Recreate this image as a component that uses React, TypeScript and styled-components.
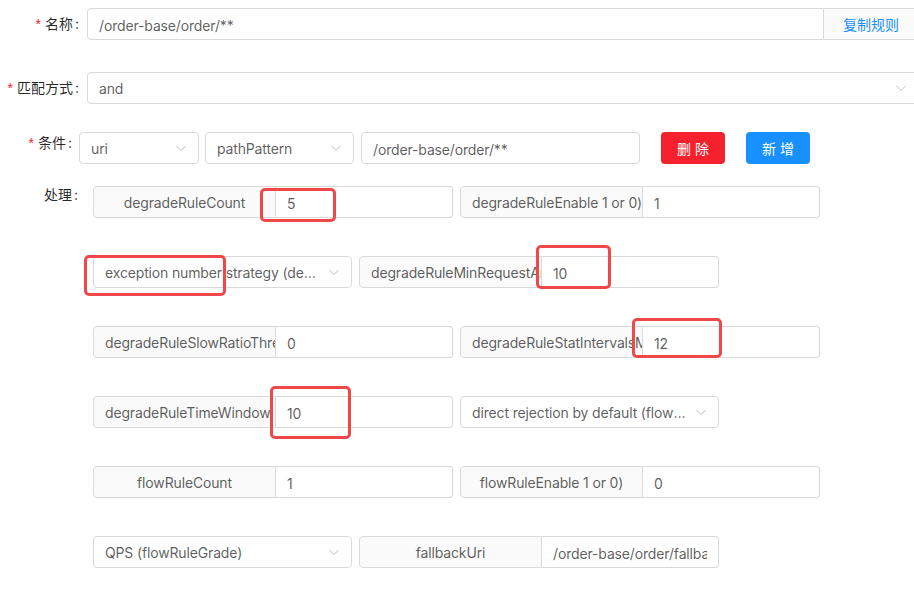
import React from 'react';
import styled, { createGlobalStyle } from 'styled-components';

const GlobalStyle = createGlobalStyle`
  html, body {
    margin: 0;
    padding: 0;
    background: #fff;
    overflow: hidden;
  }
  body {
    font-family: Inter, "Noto Sans CJK SC", sans-serif;
    font-size: 14px;
    letter-spacing: -0.15px;
    color: rgba(0, 0, 0, 0.65);
  }
  * {
    box-sizing: border-box;
  }
`;

const Page = styled.div`
  width: 919px;
  padding-top: 8px;
`;

const FormRow = styled.div<{ $mb: number; $top?: boolean }>`
  display: flex;
  align-items: ${(p) => (p.$top ? 'flex-start' : 'center')};
  margin-bottom: ${(p) => p.$mb}px;
`;

const Label = styled.label<{ $w: number; $gap: number; $lh?: number }>`
  flex: none;
  width: ${(p) => p.$w}px;
  padding-right: ${(p) => p.$gap}px;
  text-align: right;
  white-space: nowrap;
  color: rgba(0, 0, 0, 0.85);
  letter-spacing: 0;
  line-height: ${(p) => p.$lh || 32}px;

  &::after {
    content: ':';
    margin-left: 2px;
  }
`;

const Required = styled.span`
  color: #f5222d;
  margin-right: 4px;
  font-family: SimSun, "Liberation Sans", sans-serif;
`;

const Group = styled.div<{ $w?: number }>`
  display: flex;
  height: 32px;
  position: relative;
  flex: ${(p) => (p.$w ? 'none' : '1')};
  width: ${(p) => (p.$w ? `${p.$w}px` : 'auto')};
`;

const Input = styled.input<{ $w?: number; $joined?: 'left' | 'right' }>`
  height: 32px;
  flex: ${(p) => (p.$w ? 'none' : '1')};
  width: ${(p) => (p.$w ? `${p.$w}px` : 'auto')};
  min-width: 0;
  padding: 5px 11px 3px;
  border: 1px solid #d9d9d9;
  border-radius: 4px;
  ${(p) => p.$joined === 'left' && 'border-top-left-radius: 0; border-bottom-left-radius: 0; border-left: 0;'}
  ${(p) => p.$joined === 'right' && 'border-top-right-radius: 0; border-bottom-right-radius: 0;'}
  font: inherit;
  letter-spacing: inherit;
  color: rgba(0, 0, 0, 0.65);
  background: #fff;
  outline: none;
`;

const Addon = styled.div<{ $w: number; $side: 'before' | 'after' }>`
  flex: none;
  width: ${(p) => p.$w}px;
  height: 32px;
  line-height: 31px;
  padding: 0 11px;
  background: #fafafa;
  border: 1px solid #d9d9d9;
  border-radius: ${(p) => (p.$side === 'before' ? '4px 0 0 4px' : '0 4px 4px 0')};
  ${(p) => p.$side === 'after' && 'border-left: 0;'}
  text-align: center;
  white-space: nowrap;
  overflow: hidden;
`;

const LinkText = styled.span`
  color: #1890ff;
  letter-spacing: 0;
`;

const SelectBox = styled.div<{ $w?: number; $ml?: number }>`
  position: relative;
  display: flex;
  align-items: center;
  gap: 8px;
  flex: ${(p) => (p.$w ? 'none' : '1')};
  width: ${(p) => (p.$w ? `${p.$w}px` : 'auto')};
  margin-left: ${(p) => p.$ml || 0}px;
  height: 32px;
  padding: 0 11px;
  border: 1px solid #d9d9d9;
  border-radius: 4px;
  background: #fff;
`;

const SelectValue = styled.span`
  flex: 1;
  min-width: 0;
  padding-top: 1px;
  white-space: nowrap;
  overflow: hidden;
  text-overflow: ellipsis;
`;

const Arrow = styled.svg`
  flex: none;
  width: 12px;
  height: 12px;
`;

const Button = styled.button<{ $color: string; $ml: number }>`
  flex: none;
  width: 64px;
  height: 32px;
  margin-left: ${(p) => p.$ml}px;
  border: none;
  border-radius: 4px;
  background: ${(p) => p.$color};
  color: #fff;
  font: inherit;
  letter-spacing: 0;
  cursor: pointer;
`;

const Spaced = styled.div<{ $ml: number }>`
  display: flex;
  margin-left: ${(p) => p.$ml}px;
`;

const Fields = styled.div`
  flex: 1;
  display: flex;
  flex-wrap: wrap;
  column-gap: 7px;
  row-gap: 38px;
`;

const Mark = styled.div<{ $x: number; $y: number; $w: number; $h: number }>`
  position: absolute;
  left: ${(p) => p.$x}px;
  top: ${(p) => p.$y}px;
  width: ${(p) => p.$w}px;
  height: ${(p) => p.$h}px;
  border: 3px solid #f04848;
  border-radius: 5px;
  pointer-events: none;
  z-index: 2;
`;

type MarkBox = { x: number; y: number; w: number; h: number };

type Item =
  | { kind: 'field'; label: string; value: string; mark?: MarkBox }
  | { kind: 'select'; value: string; mark?: MarkBox };

const items: Item[] = [
  { kind: 'field', label: 'degradeRuleCount', value: '5', mark: { x: 167, y: 2, w: 76, h: 34 } },
  { kind: 'field', label: 'degradeRuleEnable 1 or 0)', value: '1' },
  {
    kind: 'select',
    value: 'exception number strategy (degradeRuleGrade)',
    mark: { x: -10, y: -2, w: 142, h: 41 },
  },
  { kind: 'field', label: 'degradeRuleMinRequestAmount', value: '10', mark: { x: 177, y: -11, w: 75, h: 44 } },
  { kind: 'field', label: 'degradeRuleSlowRatioThreshold', value: '0' },
  { kind: 'field', label: 'degradeRuleStatIntervalsMs', value: '12', mark: { x: 172, y: -8, w: 90, h: 40 } },
  { kind: 'field', label: 'degradeRuleTimeWindow', value: '10', mark: { x: 177, y: -10, w: 81, h: 53 } },
  { kind: 'select', value: 'direct rejection by default (flowRuleControlBehavior)' },
  { kind: 'field', label: 'flowRuleCount', value: '1' },
  { kind: 'field', label: 'flowRuleEnable 1 or 0)', value: '0' },
  { kind: 'select', value: 'QPS (flowRuleGrade)' },
  { kind: 'field', label: 'fallbackUri', value: '/order-base/order/fallback' },
];

function DownArrow() {
  return (
    <Arrow viewBox="0 0 12 12">
      <polyline points="1.5,4 6,8.5 10.5,4" fill="none" stroke="#bfbfbf" strokeWidth="1" />
    </Arrow>
  );
}

function Select({ value, w, ml, mark }: { value: string; w?: number; ml?: number; mark?: MarkBox }) {
  return (
    <SelectBox $w={w} $ml={ml}>
      <SelectValue>{value}</SelectValue>
      <DownArrow />
      {mark && <Mark $x={mark.x} $y={mark.y} $w={mark.w} $h={mark.h} />}
    </SelectBox>
  );
}

export default function App() {
  return (
    <Page>
      <GlobalStyle />
      <FormRow $mb={32}>
        <Label $w={87} $gap={8}>
          <Required>*</Required>名称
        </Label>
        <Group>
          <Input $joined="right" readOnly value="/order-base/order/**" />
          <Addon $side="after" $w={95}>
            <LinkText>复制规则</LinkText>
          </Addon>
        </Group>
      </FormRow>

      <FormRow $mb={28}>
        <Label $w={87} $gap={8}>
          <Required>*</Required>匹配方式
        </Label>
        <Select value="and" />
      </FormRow>

      <FormRow $mb={22} $top>
        <Label $w={79} $gap={7} $lh={22}>
          <Required>*</Required>条件
        </Label>
        <Select value="uri" w={120} />
        <Select value="pathPattern" w={149} ml={6} />
        <Spaced $ml={7}>
          <Input $w={279} readOnly value="/order-base/order/**" />
        </Spaced>
        <Button $color="#f5222d" $ml={21}>删 除</Button>
        <Button $color="#1890ff" $ml={21}>新 增</Button>
      </FormRow>

      <FormRow $mb={0} $top>
        <Label $w={93} $gap={15} $lh={18}>
          处理
        </Label>
        <Fields>
          {items.map((it, i) =>
            it.kind === 'select' ? (
              <Select key={i} value={it.value} w={259} mark={it.mark} />
            ) : (
              <Group key={i} $w={360}>
                <Addon $side="before" $w={183}>
                  {it.label}
                </Addon>
                <Input $joined="left" readOnly value={it.value} />
                {it.mark && <Mark $x={it.mark.x} $y={it.mark.y} $w={it.mark.w} $h={it.mark.h} />}
              </Group>
            )
          )}
        </Fields>
      </FormRow>
    </Page>
  );
}
